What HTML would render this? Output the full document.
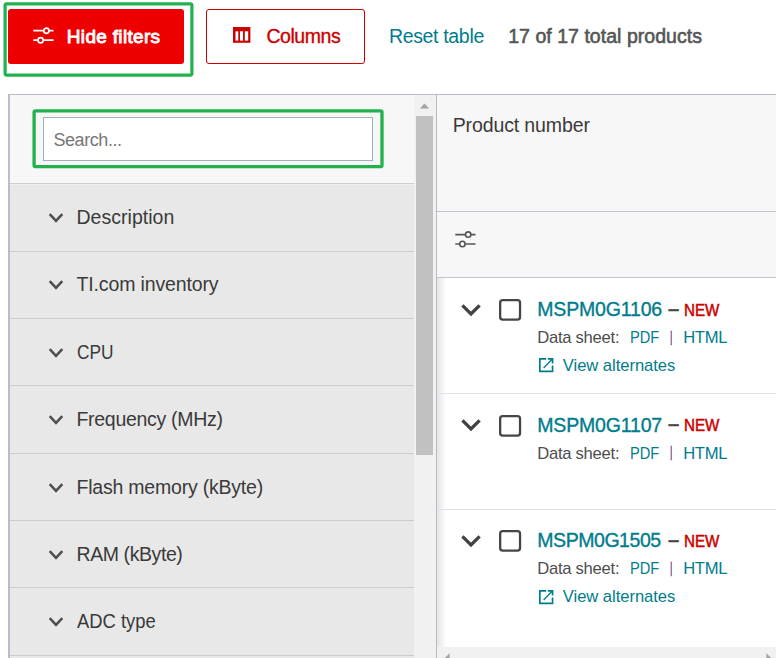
<!DOCTYPE html>
<html lang="en">
<head>
<meta charset="utf-8">
<title>Product selection table</title>
<style>
*{box-sizing:border-box;margin:0;padding:0}
html,body{width:776px;height:658px;overflow:hidden;background:#fff}
body{position:relative;font-family:"Liberation Sans",Arial,sans-serif;font-size:19px;color:#333}
ul{list-style:none}
a{text-decoration:none}
svg{position:absolute;overflow:visible}
.t{position:absolute;white-space:nowrap;line-height:1;transform-origin:0 50%;display:block;font-weight:400}
.toolbar{position:absolute;left:0;top:0;width:776px;height:80px}
.btn{position:absolute;top:9px;height:55px;border-radius:3px;font-family:inherit;text-align:left;overflow:visible}
.btn-red{left:8px;width:176px;background:#ee0000;border:0}
.btn-out{left:206px;width:159px;background:#fff;border:1px solid #cc0000}
.panel{position:absolute;left:8px;top:94px;width:429px;height:564px;background:#f7f7f7;border-top:1px solid #b9bdc9;border-left:2px solid #b9bdc9;overflow:hidden}
.search{position:absolute;left:33px;top:22px;width:330px;height:44px;background:#fff;border:1px solid #a9aebb}
.filters{position:absolute;left:0;top:88px;width:404px;height:480px}
.frow{position:absolute;left:0;width:404px;background:#e8e8e8;border-top:1px solid #cdcdcd}
.frow:first-child{box-shadow:inset 0 1px 0 #f0f0f0}
.track{position:absolute;left:404px;top:0;width:22px;height:563px;background:#f1f1f1}
.thumb{position:absolute;left:2px;top:21px;width:17px;height:339px;background:#c1c1c1}
.table{position:absolute;left:436px;top:94px;width:340px;height:564px;background:#fff;border-top:1px solid #b9bdc9;border-left:1px solid #b4bccb;overflow:hidden}
.thead{position:absolute;left:0;top:0;width:339px;height:117px;background:#f7f7f7;border-bottom:1px solid #bfc4d0}
.tfilter{position:absolute;left:0;top:117px;width:339px;height:66px;background:#f7f7f7;border-bottom:1px solid #bfc4d0}
.row{position:absolute;left:0;width:339px;border-bottom:1px solid #dfe1e8}
.shadow{position:absolute;left:0;top:183px;width:10px;height:369px;background:linear-gradient(to right,#e5e5e5,#efefef 40%,#fbfbfb 75%,#fff)}
.hscroll{position:absolute;left:0;top:552px;width:339px;height:21px;background:#f1f1f1}
.hl{position:absolute;left:0;top:0;pointer-events:none}
</style>
</head>
<body>
<div class="toolbar">
<button class="btn btn-red" type="button">
<svg style="left:25px;top:17px" width="21" height="20" viewBox="0 0 21 20"><g fill="none" stroke="#fff" stroke-width="1.7"><path d="M0.3 4.7 H10.6 M16.2 4.7 H20.5 M0.3 14.2 H4.8 M10.4 14.2 H20.5"/><circle cx="13.4" cy="4.7" r="2.6"/><circle cx="7.6" cy="14.2" r="2.6"/></g></svg>
<span class="t btn-label" style="left:58.80px;top:18.00px;font-size:19px;color:#ffffff;letter-spacing:0.323px;-webkit-text-stroke:0.9px #ffffff;">Hide filters</span>
</button>
<button class="btn btn-out" type="button">
<svg style="left:26.4px;top:17.4px" width="17.4" height="15.8" viewBox="0 0 17.4 15.8"><rect x="0" y="0" width="17.4" height="15.8" fill="#cc0000"/><rect x="2.5" y="4.3" width="2.8" height="9.3" fill="#fff"/><rect x="7.0" y="4.3" width="3.0" height="9.3" fill="#fff"/><rect x="11.8" y="4.3" width="3.4" height="9.3" fill="#fff"/></svg>
<span class="t btn-label" style="left:59.40px;top:17.00px;font-size:19.5px;color:#cc0000;letter-spacing:-0.432px;-webkit-text-stroke:0.35px #cc0000;">Columns</span>
</button>
<a class="t link" style="left:388.90px;top:27.00px;font-size:19.5px;color:#007c8c;letter-spacing:-0.330px;">Reset table</a>
<span class="t count" style="left:508.20px;top:27.00px;font-size:19.5px;color:#555555;letter-spacing:0.036px;-webkit-text-stroke:0.6px #555555;">17 of 17 total products</span>
</div>
<aside class="panel">
<div class="search">
<label class="t placeholder" style="left:9.40px;top:13.00px;font-size:18px;color:#777777;letter-spacing:-0.417px;">Search...</label>
</div>
<ul class="filters">
<li class="frow" style="top:0px;height:68px">
<svg class="chev" style="left:37.6px;top:27.6px" width="16" height="12" viewBox="0 0 16 12"><path d="M1.7 2.15 L8 8.95 L14.3 2.15" fill="none" stroke="#4f4f4f" stroke-width="2.5"/></svg>
<span class="t filter-label" style="left:66.50px;top:24.00px;font-size:19.5px;color:#3a3a3a;letter-spacing:0.021px;">Description</span>
</li>
<li class="frow" style="top:68px;height:67px">
<svg class="chev" style="left:37.6px;top:26.6px" width="16" height="12" viewBox="0 0 16 12"><path d="M1.7 2.15 L8 8.95 L14.3 2.15" fill="none" stroke="#4f4f4f" stroke-width="2.5"/></svg>
<span class="t filter-label" style="left:66.50px;top:23.00px;font-size:19.5px;color:#3a3a3a;letter-spacing:-0.138px;">TI.com inventory</span>
</li>
<li class="frow" style="top:135px;height:67px">
<svg class="chev" style="left:37.6px;top:27.6px" width="16" height="12" viewBox="0 0 16 12"><path d="M1.7 2.15 L8 8.95 L14.3 2.15" fill="none" stroke="#4f4f4f" stroke-width="2.5"/></svg>
<span class="t filter-label" style="left:67.20px;top:24.00px;font-size:19.5px;color:#3a3a3a;transform:scaleX(0.8855);">CPU</span>
</li>
<li class="frow" style="top:202px;height:68px">
<svg class="chev" style="left:37.6px;top:27.6px" width="16" height="12" viewBox="0 0 16 12"><path d="M1.7 2.15 L8 8.95 L14.3 2.15" fill="none" stroke="#4f4f4f" stroke-width="2.5"/></svg>
<span class="t filter-label" style="left:66.50px;top:24.00px;font-size:19.5px;color:#3a3a3a;letter-spacing:-0.294px;">Frequency (MHz)</span>
</li>
<li class="frow" style="top:270px;height:67px">
<svg class="chev" style="left:37.6px;top:27.6px" width="16" height="12" viewBox="0 0 16 12"><path d="M1.7 2.15 L8 8.95 L14.3 2.15" fill="none" stroke="#4f4f4f" stroke-width="2.5"/></svg>
<span class="t filter-label" style="left:66.50px;top:24.00px;font-size:19.5px;color:#3a3a3a;letter-spacing:-0.211px;">Flash memory (kByte)</span>
</li>
<li class="frow" style="top:337px;height:67px">
<svg class="chev" style="left:37.6px;top:27.5px" width="16" height="12" viewBox="0 0 16 12"><path d="M1.7 2.15 L8 8.95 L14.3 2.15" fill="none" stroke="#4f4f4f" stroke-width="2.5"/></svg>
<span class="t filter-label" style="left:66.50px;top:24.00px;font-size:19.5px;color:#3a3a3a;letter-spacing:-0.421px;">RAM (kByte)</span>
</li>
<li class="frow" style="top:404px;height:68px">
<svg class="chev" style="left:37.6px;top:27.5px" width="16" height="12" viewBox="0 0 16 12"><path d="M1.7 2.15 L8 8.95 L14.3 2.15" fill="none" stroke="#4f4f4f" stroke-width="2.5"/></svg>
<span class="t filter-label" style="left:66.50px;top:24.00px;font-size:19.5px;color:#3a3a3a;transform:scaleX(0.9431);">ADC type</span>
</li>
<li class="frow" style="top:472px;height:8px"></li>
</ul>
<div class="track"><div class="thumb"></div>
<svg style="left:5px;top:8px" width="11" height="6" viewBox="0 0 11 6"><path d="M0.8 5.6 L5.5 0.6 L10.2 5.6 Z" fill="#a3a3a3"/></svg>
</div>
</aside>
<section class="table">
<div class="thead">
<span class="t th" style="left:15.70px;top:21.00px;font-size:19.5px;color:#3a3a3a;letter-spacing:-0.119px;">Product number</span>
</div>
<div class="tfilter">
<svg style="left:18px;top:18px" width="21" height="19" viewBox="0 0 21 19"><g fill="none" stroke="#555" stroke-width="1.6"><path d="M0.3 4.6 H10.3 M16.1 4.6 H20.5 M0.3 14 H4.5 M10.3 14 H20.5"/><circle cx="13.2" cy="4.6" r="2.7"/><circle cx="7.4" cy="14" r="2.7"/></g></svg>
</div>
<div class="shadow"></div>
<div class="row" style="top:183px;height:116px">
<svg class="chev" style="left:23.4px;top:23.6px" width="22" height="16" viewBox="0 0 22 16"><path d="M2.4 3.3 L11 11.9 L19.6 3.3" fill="none" stroke="#424242" stroke-width="3.3"/></svg>
<svg class="cbx" style="left:61.7px;top:20.9px" width="22.2" height="21.8" viewBox="0 0 22.2 21.8"><rect x="1.15" y="1.15" width="19.9" height="19.5" rx="2.6" fill="#fff" stroke="#454545" stroke-width="2.3"/></svg>
<a class="t pn" style="left:100.30px;top:22.00px;font-size:19.5px;color:#007c8c;letter-spacing:-0.178px;-webkit-text-stroke:0.35px #007c8c;">MSPM0G1106</a>
<span class="t dash" style="left:231.30px;top:21.00px;font-size:19px;color:#444444;font-weight:700;transform:scaleX(1.0600);-webkit-text-stroke:0.4px #444444;">–</span>
<span class="t new" style="left:246.70px;top:25.00px;font-size:16px;color:#cc0000;transform:scaleX(0.9482);-webkit-text-stroke:0.5px #cc0000;">NEW</span>
<span class="t ds" style="left:100.20px;top:52.00px;font-size:16.6px;color:#4d4d4d;letter-spacing:-0.255px;">Data sheet:</span>
<a class="t link" style="left:192.50px;top:52.00px;font-size:16.6px;color:#007c8c;transform:scaleX(0.8830);">PDF</a>
<a class="t link" style="left:246.20px;top:52.00px;font-size:16.6px;color:#007c8c;letter-spacing:-0.314px;">HTML</a>
<span class="t sep" style="left:232.90px;top:52.00px;font-size:14px;color:#5a3575;transform:scaleX(0.6500);-webkit-text-stroke:0.3px #5a3575;">|</span>
<a class="t link" style="left:125.80px;top:80.00px;font-size:16.6px;color:#007c8c;letter-spacing:-0.047px;">View alternates</a>
<svg class="ext" style="left:102.0px;top:80.2px" width="15" height="15" viewBox="0 0 15 15"><path d="M7.2 0.85 H0.85 V13.45 H13.55 V7.4" fill="none" stroke="#007c8c" stroke-width="1.7"/><path d="M8.8 0.85 H13.55 V5.6" fill="none" stroke="#007c8c" stroke-width="1.7"/><path d="M13.3 1.1 L4.6 9.9" fill="none" stroke="#007c8c" stroke-width="1.4"/></svg>
</div>
<div class="row" style="top:299px;height:116px">
<svg class="chev" style="left:23.4px;top:23.3px" width="22" height="16" viewBox="0 0 22 16"><path d="M2.4 3.3 L11 11.9 L19.6 3.3" fill="none" stroke="#424242" stroke-width="3.3"/></svg>
<svg class="cbx" style="left:61.7px;top:20.6px" width="22.2" height="21.8" viewBox="0 0 22.2 21.8"><rect x="1.15" y="1.15" width="19.9" height="19.5" rx="2.6" fill="#fff" stroke="#454545" stroke-width="2.3"/></svg>
<a class="t pn" style="left:100.30px;top:22.00px;font-size:19.5px;color:#007c8c;letter-spacing:-0.178px;-webkit-text-stroke:0.35px #007c8c;">MSPM0G1107</a>
<span class="t dash" style="left:231.30px;top:20.00px;font-size:19px;color:#444444;font-weight:700;transform:scaleX(1.0600);-webkit-text-stroke:0.4px #444444;">–</span>
<span class="t new" style="left:246.70px;top:24.00px;font-size:16px;color:#cc0000;transform:scaleX(0.9482);-webkit-text-stroke:0.5px #cc0000;">NEW</span>
<span class="t ds" style="left:100.20px;top:52.00px;font-size:16.6px;color:#4d4d4d;letter-spacing:-0.255px;">Data sheet:</span>
<a class="t link" style="left:192.50px;top:52.00px;font-size:16.6px;color:#007c8c;transform:scaleX(0.8830);">PDF</a>
<a class="t link" style="left:246.20px;top:52.00px;font-size:16.6px;color:#007c8c;letter-spacing:-0.314px;">HTML</a>
<span class="t sep" style="left:232.90px;top:51.00px;font-size:14px;color:#5a3575;transform:scaleX(0.6500);-webkit-text-stroke:0.3px #5a3575;">|</span>
</div>
<div class="row" style="top:415px;height:137px;border-bottom:0">
<svg class="chev" style="left:23.4px;top:22.9px" width="22" height="16" viewBox="0 0 22 16"><path d="M2.4 3.3 L11 11.9 L19.6 3.3" fill="none" stroke="#424242" stroke-width="3.3"/></svg>
<svg class="cbx" style="left:61.7px;top:20.2px" width="22.2" height="21.8" viewBox="0 0 22.2 21.8"><rect x="1.15" y="1.15" width="19.9" height="19.5" rx="2.6" fill="#fff" stroke="#454545" stroke-width="2.3"/></svg>
<a class="t pn" style="left:100.30px;top:21.00px;font-size:19.5px;color:#007c8c;letter-spacing:-0.450px;-webkit-text-stroke:0.35px #007c8c;">MSPM0G1505</a>
<span class="t dash" style="left:231.30px;top:20.00px;font-size:19px;color:#444444;font-weight:700;transform:scaleX(1.0600);-webkit-text-stroke:0.4px #444444;">–</span>
<span class="t new" style="left:246.70px;top:24.00px;font-size:16px;color:#cc0000;transform:scaleX(0.9482);-webkit-text-stroke:0.5px #cc0000;">NEW</span>
<span class="t ds" style="left:100.20px;top:51.00px;font-size:16.6px;color:#4d4d4d;letter-spacing:-0.255px;">Data sheet:</span>
<a class="t link" style="left:192.50px;top:51.00px;font-size:16.6px;color:#007c8c;transform:scaleX(0.8830);">PDF</a>
<a class="t link" style="left:246.20px;top:51.00px;font-size:16.6px;color:#007c8c;letter-spacing:-0.314px;">HTML</a>
<span class="t sep" style="left:232.90px;top:51.00px;font-size:14px;color:#5a3575;transform:scaleX(0.6500);-webkit-text-stroke:0.3px #5a3575;">|</span>
<a class="t link" style="left:125.80px;top:79.00px;font-size:16.6px;color:#007c8c;letter-spacing:-0.047px;">View alternates</a>
<svg class="ext" style="left:102.0px;top:79.5px" width="15" height="15" viewBox="0 0 15 15"><path d="M7.2 0.85 H0.85 V13.45 H13.55 V7.4" fill="none" stroke="#007c8c" stroke-width="1.7"/><path d="M8.8 0.85 H13.55 V5.6" fill="none" stroke="#007c8c" stroke-width="1.7"/><path d="M13.3 1.1 L4.6 9.9" fill="none" stroke="#007c8c" stroke-width="1.4"/></svg>
</div>
<div class="hscroll">
<svg style="left:6.7px;top:5.5px" width="6" height="11" viewBox="0 0 6 11"><path d="M5.6 0.2 L0.3 5.5 L5.6 10.8 Z" fill="#a3a3a3"/></svg>
<svg style="left:329px;top:5.5px" width="6" height="11" viewBox="0 0 6 11"><path d="M0.4 0.2 L5.7 5.5 L0.4 10.8 Z" fill="#a3a3a3"/></svg>
</div>
</section>
<svg class="hl" width="776" height="658" viewBox="0 0 776 658"><rect x="5.1" y="3.9" width="186.8" height="71.2" rx="1.5" fill="none" stroke="#22b14c" stroke-width="3.2"/><rect x="34.1" y="110.8" width="347.9" height="55.9" rx="1.5" fill="none" stroke="#22b14c" stroke-width="3.3"/></svg>
</body>
</html>
